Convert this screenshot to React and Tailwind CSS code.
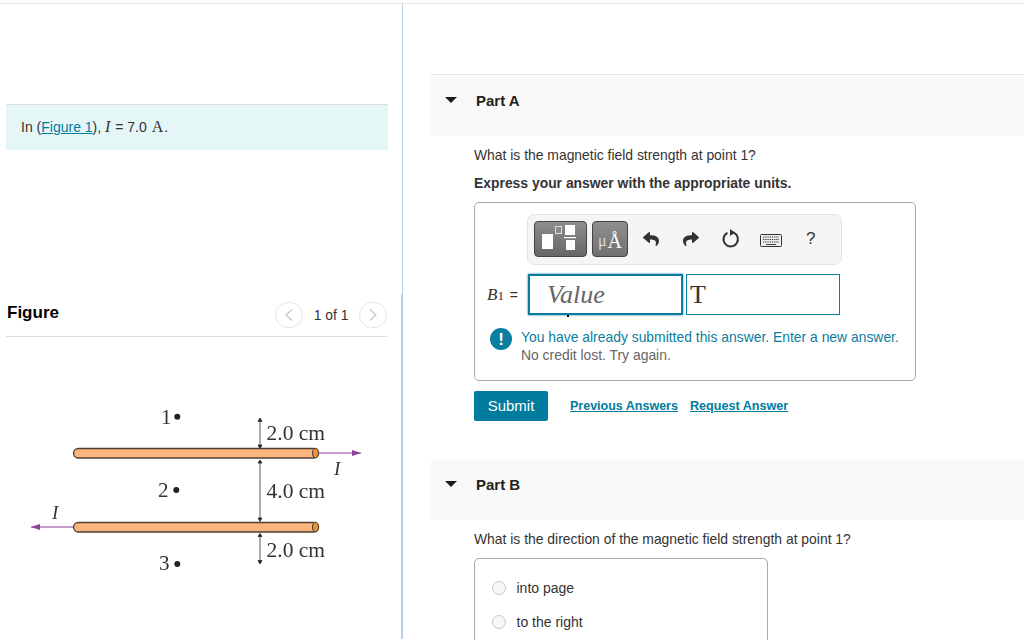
import React from 'react';
import { FaReply, FaShare } from 'react-icons/fa';

const sans = { fontFamily: '"Liberation Sans", Arial, sans-serif' };
const serif = { fontFamily: '"Liberation Serif", serif' };

const Chevron = ({ dir }) => (
  <button className="w-[28px] h-[26px] rounded-full border border-[#e6e6e6] bg-white flex items-center justify-center">
    <svg width="10" height="14" viewBox="0 0 10 14" fill="none" stroke="#c4c4c4" strokeWidth="1.2">
      {dir === 'left' ? <path d="M8 1.5 2 7l6 5.5" /> : <path d="M2 1.5 8 7l-6 5.5" />}
    </svg>
  </button>
);

const Figure = () => (
  <svg viewBox="0 337 402 303" className="w-[402px] h-[303px] blur-[0.3px]">
    <defs>
      <marker id="head" markerWidth="10" markerHeight="8" refX="9" refY="3" orient="auto" markerUnits="userSpaceOnUse">
        <path d="M0 0 9 3 0 6z" fill="#8e3f9c" />
      </marker>
    </defs>
    {[448, 522].map((y) => (
      <g key={y}>
        <rect x="73.5" y={y + 0.5} width="245" height="9.5" rx="4.7" fill="#fbb47c" stroke="#4f3f33" strokeWidth="1.4" />
        <ellipse cx="315.5" cy={y + 5} rx="3" ry="4.7" fill="#ec9340" stroke="#4f3f33" strokeWidth="1.1" />
      </g>
    ))}
    <path d="M319 453H361" stroke="#8e3f9c" strokeWidth="1.2" markerEnd="url(#head)" />
    <path d="M73 527H31" stroke="#8e3f9c" strokeWidth="1.2" markerEnd="url(#head)" />
    <g fill="#2b2b2b" stroke="#2b2b2b" strokeWidth="0.8">
      <path d="M260 419V447M260 461V520M260 534V563" fill="none" />
      <path d="M258 421.5 260 418 262 421.5zM258 445 260 448.5 262 445zM258 463 260 460 262 463zM258 518 260 521.5 262 518zM258 536.5 260 533.5 262 536.5zM258 560.5 260 564 262 560.5z" />
    </g>
    <g fill="#222">
      <circle cx="177.3" cy="416.7" r="3" />
      <circle cx="176.3" cy="490" r="3" />
      <circle cx="177.3" cy="564" r="3" />
    </g>
    <g fontFamily='"Liberation Serif", serif' fontSize="21" fill="#333">
      <text x="161" y="424">1</text>
      <text x="158" y="497">2</text>
      <text x="159" y="570">3</text>
      <g fontSize="21.5">
        <text x="266.5" y="440">2.0 cm</text>
        <text x="266.5" y="498">4.0 cm</text>
        <text x="266.5" y="557">2.0 cm</text>
      </g>
      <text x="334" y="475" fontStyle="italic" fontSize="19">I</text>
      <text x="52" y="519" fontStyle="italic" fontSize="19">I</text>
    </g>
  </svg>
);

const PartHeader = ({ title, height, arrowTop, titleTop }) => (
  <div className={`${height} bg-[#f9f9f9] flex items-start pl-[14px]`}>
    <svg width="12" height="6" viewBox="0 0 12 6" className={arrowTop}>
      <path d="M0 0h12L6 6z" fill="#1c1c1c" />
    </svg>
    <span className={`ml-[19px] ${titleTop} text-[15px] leading-[18px] font-bold text-[#222]`}>{title}</span>
  </div>
);

const Toolbar = () => (
  <div className="ml-[52px] w-[315px] h-[51px] rounded-[7px] border border-[#e4e4e4] bg-[#f5f5f5] flex items-center pl-[6px] pb-[1px]">
    <button className="w-[53px] h-[36px] rounded-[4px] border border-[#444] bg-linear-to-b from-[#8f8f8f] to-[#666] flex items-center justify-center">
      <svg width="38" height="28" viewBox="0 0 38 28">
        <rect x="0" y="9" width="11" height="15" fill="#fff" />
        <rect x="13.5" y="1.5" width="6" height="7" fill="#8a8a8a" stroke="#ddd" />
        <rect x="23" y="0" width="10" height="10" fill="#fff" />
        <rect x="22" y="12" width="12" height="1.2" fill="#fff" />
        <rect x="24" y="15" width="9" height="10" fill="#fff" />
      </svg>
    </button>
    <button className="ml-[5px] w-[36px] h-[36px] rounded-[4px] border border-[#444] bg-linear-to-b from-[#8f8f8f] to-[#707070] flex items-end justify-center pb-[5px] text-white text-[20px] leading-[20px]" style={serif}>
      <span className="text-[16px] text-[#ddd] mr-[1px]">μ</span>Å
    </button>
    <FaReply className="ml-[15px] text-[#333] w-[16px] h-[16px]" />
    <FaShare className="ml-[24px] text-[#333] w-[16px] h-[16px]" />
    <svg width="20" height="20" viewBox="0 0 20 20" className="ml-[22px]" fill="none">
      <path d="M12.5 3.6A7.2 7.2 0 1 1 6.5 3.8" stroke="#333" strokeWidth="2" />
      <path d="M9 0 14 3.6 9 7z" fill="#333" />
    </svg>
    <svg width="22" height="13" viewBox="0 0 22 13" className="ml-[19px] mt-[2px]">
      <rect x="0.5" y="0.5" width="21" height="12" rx="1" fill="#eee" stroke="#333" />
      <path d="M3 3h16M3 5.5h16M3 8h16" stroke="#444" strokeDasharray="1.4 0.8" />
      <path d="M6 10.5h10" stroke="#444" />
    </svg>
    <span className="ml-[24px] text-[17px] text-[#333]">?</span>
  </div>
);

const Radio = ({ label, className }) => (
  <div className={`flex items-center ${className}`}>
    <span className="w-[14px] h-[14px] rounded-full border border-[#c8c8c8] bg-[#f7f7f7]" />
    <span className="ml-[10.5px] text-[14px] leading-[18px] text-[#333]">{label}</span>
  </div>
);

export default function App() {
  return (
    <div className="h-[640px] overflow-hidden bg-white pt-[3px] text-[#333]" style={sans}>
      <div className="border-t border-[#e5e5e5] flex h-[636px]">
        {/* Left panel */}
        <div className="relative w-[403px] shrink-0 border-r border-[#bccfe2] pl-[6px] pr-[14px]">
          <span className="absolute right-[-1px] top-[290px] bottom-0 w-[2px] bg-[#bccfe2]" />
          <div className="mt-[100px] h-[46px] border-t border-[#dddddd] bg-[#e5f6f7] pl-[15px] pt-[13px] text-[14px] leading-[18px]">
            In (<a className="text-[#007c9e] underline">Figure 1</a>),{' '}
            <span className="italic text-[16px] mr-[1px]" style={serif}>I</span> = 7.0{' '}
            <span className="text-[16px] ml-[1px] mr-[1px]" style={serif}>A</span>.
          </div>
          <div className="mt-[148px] mr-[1px] h-[39px] border-b border-[#dddddd] flex items-start">
            <h2 className="mt-[3px] ml-[1px] text-[17px] leading-[24px] font-bold text-black">Figure</h2>
            <div className="ml-auto flex items-center mt-[4px]">
              <Chevron dir="left" />
              <span className="mx-[10.5px] text-[13.9px] text-[#333]">1 of 1</span>
              <Chevron dir="right" />
            </div>
          </div>
          <div className="-ml-[6px]">
            <Figure />
          </div>
        </div>

        {/* Right panel */}
        <div className="flex-1 pl-[28px]">
          <div className="mt-[70px] border-t border-[#e5e5e5]">
            <PartHeader title="Part A" height="h-[61px]" arrowTop="mt-[22px]" titleTop="mt-[16.5px]" />
          </div>
          <div className="pl-[43px]">
            <p className="mt-[10px] text-[13.9px] leading-[18px]">What is the magnetic field strength at point 1?</p>
            <p className="mt-[10px] text-[13.9px] leading-[18px] font-bold">Express your answer with the appropriate units.</p>

            <div className="relative mt-[10px] w-[442px] h-[179px] rounded-[5px] border border-[#a8a8a8] pt-[11px]">
              <Toolbar />
              <div className="flex items-center mt-[9px] ml-[12px]">
                <span className="w-[41px] text-[14px] whitespace-nowrap">
                  <span className="italic text-[17px]" style={serif}>B</span>
                  <span className="text-[13px] mr-[2px]" style={serif}>1</span> =
                </span>
                <div className="w-[155px] h-[41px] border-2 border-[#0a7ea0] shadow-[0_0_2px_#0a7ea0] flex items-center pl-[17px] italic text-[26px] text-[#666]" style={serif}>
                  Value
                </div>
                <div className="ml-[3px] w-[154px] h-[41px] border border-[#0a7ea0] flex items-center pl-[3px] text-[26px] text-[#333]" style={serif}>
                  T
                </div>
              </div>
              <span className="absolute left-[92px] top-[112px] w-[2px] h-[2px] bg-black" />
              <div className="flex mt-[13px] ml-[15px]">
                <span className="w-[22px] h-[22px] rounded-full bg-[#0a7ea0] flex items-center justify-center text-white text-[17px] font-bold leading-none">!</span>
                <div className="ml-[9px] text-[13.9px] leading-[18px]">
                  <p className="text-[#0a7ea0]">You have already submitted this answer. Enter a new answer.</p>
                  <p className="text-[#666]">No credit lost. Try again.</p>
                </div>
              </div>
            </div>

            <div className="flex items-center mt-[10px]">
              <button className="w-[74px] h-[30px] rounded-[2px] bg-[#007c9e] text-white text-[15px]">Submit</button>
              <a className="ml-[22px] text-[12.5px] font-bold text-[#007c9e] underline">Previous Answers</a>
              <a className="ml-[12px] text-[12.6px] font-bold text-[#007c9e] underline">Request Answer</a>
            </div>
          </div>

          <div className="mt-[39px]">
            <PartHeader title="Part B" height="h-[60px]" arrowTop="mt-[21px]" titleTop="mt-[16px]" />
          </div>
          <div className="pl-[43px]">
            <p className="mt-[10px] text-[13.9px] leading-[18px]">What is the direction of the magnetic field strength at point 1?</p>
            <div className="mt-[10px] w-[294px] h-[120px] rounded-[5px] border border-[#a8a8a8] pl-[17px]">
              <Radio label="into page" className="mt-[20px]" />
              <Radio label="to the right" className="mt-[16px]" />
            </div>
          </div>
        </div>
      </div>
    </div>
  );
}
